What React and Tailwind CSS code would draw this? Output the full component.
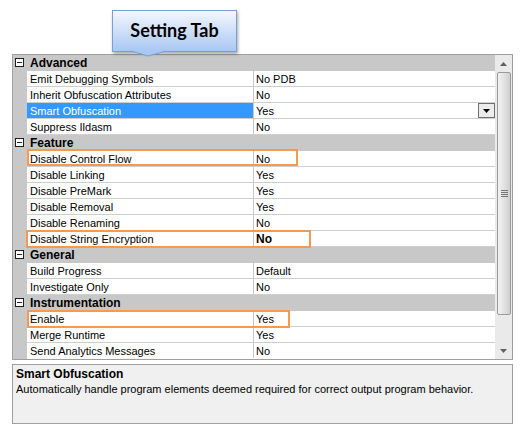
import React from "react";

const rows = [
  { cat: "Advanced" },
  { name: "Emit Debugging Symbols", value: "No PDB" },
  { name: "Inherit Obfuscation Attributes", value: "No" },
  { name: "Smart Obfuscation", value: "Yes", selected: true },
  { name: "Suppress Ildasm", value: "No" },
  { cat: "Feature" },
  { name: "Disable Control Flow", value: "No" },
  { name: "Disable Linking", value: "Yes" },
  { name: "Disable PreMark", value: "Yes" },
  { name: "Disable Removal", value: "Yes" },
  { name: "Disable Renaming", value: "No" },
  { name: "Disable String Encryption", value: "No", bold: true },
  { cat: "General" },
  { name: "Build Progress", value: "Default" },
  { name: "Investigate Only", value: "No" },
  { cat: "Instrumentation" },
  { name: "Enable", value: "Yes" },
  { name: "Merge Runtime", value: "Yes" },
  { name: "Send Analytics Messages", value: "No", last: true },
];

const CollapseBox = () => (
  <div className="w-[9px] h-[9px] border border-[#1e1e1e] bg-white flex items-center justify-center mt-[3px] ml-[2px]">
    <div className="w-[5px] h-[1px] bg-[#1e1e1e]" />
  </div>
);

const Row = ({ row }) => {
  if (row.cat) {
    return (
      <div className="flex h-[16px] bg-[#c8c8c8]">
        <div className="w-[14px]">
          <CollapseBox />
        </div>
        <div className="pl-[3px] h-[15px] leading-[17px] font-bold text-[12px] text-black">
          {row.cat}
        </div>
      </div>
    );
  }
  return (
    <div className="flex h-[16px]">
      <div className="w-[14px] bg-[#c8c8c8]" />
      <div
        className={`flex flex-1 ${row.last ? "" : "border-b border-[#cfcfcf]"}`}
      >
        <div
          className={`w-[227px] h-[15px] pl-[3px] leading-[17px] border-r border-[#c8c8c8] whitespace-nowrap ${
            row.selected ? "bg-[#3399ff] text-white" : "bg-white text-black"
          }`}
        >
          {row.name}
        </div>
        <div
          className={`relative flex-1 h-[15px] pl-[2px] leading-[17px] bg-white text-black ${
            row.bold ? "font-bold text-[12px]" : ""
          }`}
        >
          {row.value}
          {row.selected && (
            <div className="absolute right-0 top-0 w-[17px] h-[15px] border border-[#707070] bg-[#ececec] flex items-center justify-center">
              <svg width="7" height="4" viewBox="0 0 7 4">
                <path d="M0 0h7L3.5 4z" fill="#000" />
              </svg>
            </div>
          )}
        </div>
      </div>
    </div>
  );
};

const Scrollbar = () => (
  <div className="w-[17px] h-full bg-[#eaeaea] flex flex-col items-center">
    <div className="h-[17px] w-full flex items-center justify-center">
      <svg width="7" height="4" viewBox="0 0 7 4">
        <path d="M0 4h7L3.5 0z" fill="#606060" />
      </svg>
    </div>
    <div className="w-[14px] h-[243px] ml-[1px] rounded-[2px] border border-[#9a9a9a] bg-gradient-to-r from-[#f2f2f2] via-[#e2e2e2] to-[#cfcfcf] flex items-center justify-center">
      <div className="flex flex-col gap-[1px]">
        <div className="w-[7px] h-[1px] bg-[#777]" />
        <div className="w-[7px] h-[1px] bg-[#777]" />
        <div className="w-[7px] h-[1px] bg-[#777]" />
        <div className="w-[7px] h-[1px] bg-[#777]" />
      </div>
    </div>
    <div className="flex-1" />
    <div className="h-[17px] w-full flex items-center justify-center">
      <svg width="7" height="4" viewBox="0 0 7 4">
        <path d="M0 0h7L3.5 4z" fill="#606060" />
      </svg>
    </div>
  </div>
);

export default function App() {
  return (
    <div className="relative w-[521px] h-[428px] bg-white font-['Liberation_Sans',Arial,sans-serif] text-[11px] pt-[10px]">
      <div className="relative ml-[112px] w-[125px] h-[42px] z-10">
        <div className="w-full h-full border border-[#7a9fd6] bg-gradient-to-b from-[#f3f7fe] to-[#a9c7f3] shadow-[1px_2px_3px_rgba(0,0,0,0.35)] flex items-center justify-center">
          <span className="font-['Lato',sans-serif] font-bold text-[18px] text-black pb-[2px]">
            Setting Tab
          </span>
        </div>
        <svg
          className="absolute left-[19px] top-[40px]"
          width="36"
          height="7"
          viewBox="0 0 36 7"
        >
          <path d="M0 1L17 6L35 1z" fill="#a9c7f3" />
          <path d="M0 1L17 6L35 1" fill="none" stroke="#7a9fd6" strokeWidth="1" />
        </svg>
      </div>

      <div className="relative mt-[2px] ml-[12px] w-[501px] h-[306px] border border-[#a0a0a0] flex">
        <div className="w-[482px] flex flex-col">
          {rows.map((row, i) => (
            <Row key={i} row={row} />
          ))}
        </div>
        <Scrollbar />

        <div className="absolute left-[14px] top-[94px] w-[271px] h-[17px] border-2 border-[#f79a4f]" />
        <div className="absolute left-[13px] top-[175px] w-[285px] h-[18px] border-2 border-[#f79a4f]" />
        <div className="absolute left-[14px] top-[255px] w-[263px] h-[18px] border-2 border-[#f79a4f]" />
      </div>

      <div className="mt-[4px] ml-[12px] w-[501px] h-[60px] border border-[#a0a0a0] bg-[#f0f0f0] px-[3px] pt-[2px] text-black">
        <div className="font-bold text-[12px] leading-[15px]">Smart Obfuscation</div>
        <div className="leading-[15px] whitespace-nowrap">
          Automatically handle program elements deemed required for correct
          output program behavior.
        </div>
      </div>
    </div>
  );
}
